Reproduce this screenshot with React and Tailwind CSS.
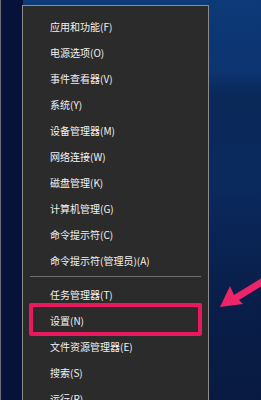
const items = [
  '应用和功能(F)',
  '电源选项(O)',
  '事件查看器(V)',
  '系统(Y)',
  '设备管理器(M)',
  '网络连接(W)',
  '磁盘管理(K)',
  '计算机管理(G)',
  '命令提示符(C)',
  '命令提示符(管理员)(A)',
];

const items2 = ['任务管理器(T)', '设置(N)', '文件资源管理器(E)', '搜索(S)', '运行(R)'];

function MenuItem({ label, marked }) {
  return (
    <div className="relative h-[26px] flex items-center pl-[27px] text-[10px] text-[#f2f2f2] whitespace-nowrap">
      {marked && (
        <div className="absolute left-[6px] right-[6px] top-[-4px] bottom-[-3px] border-[4px] border-[#e8195c] rounded-[2px]" />
      )}
      <span className="relative">{label}</span>
    </div>
  );
}

export default function App() {
  return (
    <div
      className="relative w-[261px] h-[400px] overflow-hidden border-l border-[#6a6f7a] bg-[linear-gradient(180deg,#0d3a78_0%,#0c3470_18%,#0a2858_24%,#0a2a5e_45%,#09204c_70%,#081a40_100%)]"
      style={{ fontFamily: '"Noto Sans CJK SC", "Noto Sans", sans-serif' }}
    >
      <div className="absolute left-0 top-0 bottom-0 w-[22px] bg-[#06123a]" />
      <div className="relative ml-[21px] mt-[5px] w-[187px] bg-[#2b2b2b] border border-[#8c8c8c] pt-[7px]">
        {items.map((t) => (
          <MenuItem key={t} label={t} />
        ))}
        <div className="mx-[7px] mt-[3px] mb-[4px] h-px bg-[#6e6e6e]" />
        {items2.map((t) => (
          <MenuItem key={t} label={t} marked={t === '设置(N)'} />
        ))}
      </div>
      <svg className="absolute left-[212px] top-[272px]" width="49" height="42" viewBox="0 0 49 42">
        <polygon points="7,35 17,14 21,23 49,6 49,14 26,28 30,32" fill="#ee2468" />
      </svg>
    </div>
  );
}
